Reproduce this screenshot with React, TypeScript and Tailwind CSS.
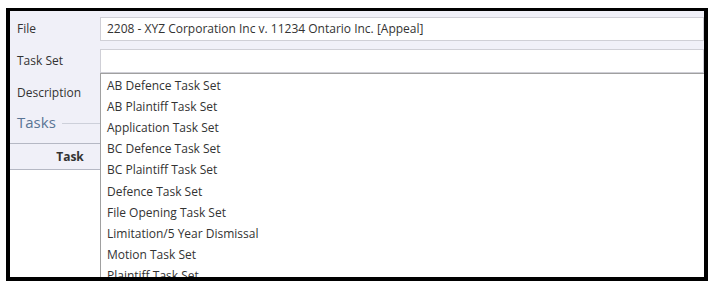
import React from "react";

const taskSets = [
  "AB Defence Task Set",
  "AB Plaintiff Task Set",
  "Application Task Set",
  "BC Defence Task Set",
  "BC Plaintiff Task Set",
  "Defence Task Set",
  "File Opening Task Set",
  "Limitation/5 Year Dismissal",
  "Motion Task Set",
  "Plaintiff Task Set",
];

const App = () => {
  return (
    <div className="w-[718px] h-[290px] bg-white pt-[8px] pl-[6px] font-['Open_Sans',sans-serif] text-[12px] text-[#333]">
      <div className="relative w-[702px] h-[273px] border-[4px] border-t-[3px] border-black bg-[#f0f0f8] overflow-hidden">
        {/* form rows */}
        <div className="grid grid-cols-[90px_1fr] pt-[6px]">
          <div className="h-[24px] flex items-center pl-[7px]">File</div>
          <div className="h-[24px] bg-white border border-[#cfcfd6] flex items-center pl-[6px]">
            2208 - XYZ Corporation Inc v. 11234 Ontario Inc. [Appeal]
          </div>
          <div className="h-[8px]" />
          <div className="h-[8px]" />
          <div className="h-[24px] flex items-center pl-[7px]">Task Set</div>
          <div className="h-[24px] bg-white border border-[#cfcfd6]" />
          <div className="h-[36px] flex items-center pl-[7px] pt-[4px]">Description</div>
          <div className="h-[36px] bg-white border border-[#cfcfd6]" />
        </div>

        {/* Tasks group */}
        <div className="flex items-center gap-[6px] pl-[7px] mt-[2px] h-[22px]">
          <span className="text-[15px] text-[#5a7595]">Tasks</span>
          <div className="flex-1 h-px bg-[#cdd0da] mt-[2px]" />
        </div>

        <div className="mt-[10px] border-t border-[#b5b8c4] bg-white h-[200px]">
          <div className="h-[26px] bg-[#f0f0f8] border-b border-[#b5b8c4] flex items-center">
            <div className="w-[90px] text-center font-bold pl-[30px]">Task</div>
          </div>
        </div>

        {/* open dropdown list */}
        <div className="absolute left-[90px] top-[62px] right-0 bottom-0 bg-white border-l border-t border-[#a0a0a0] pt-[1px]">
          {taskSets.map((t) => (
            <div key={t} className="h-[21.2px] flex items-center pl-[6px] whitespace-nowrap">
              {t}
            </div>
          ))}
        </div>
      </div>
    </div>
  );
};

export default App;
